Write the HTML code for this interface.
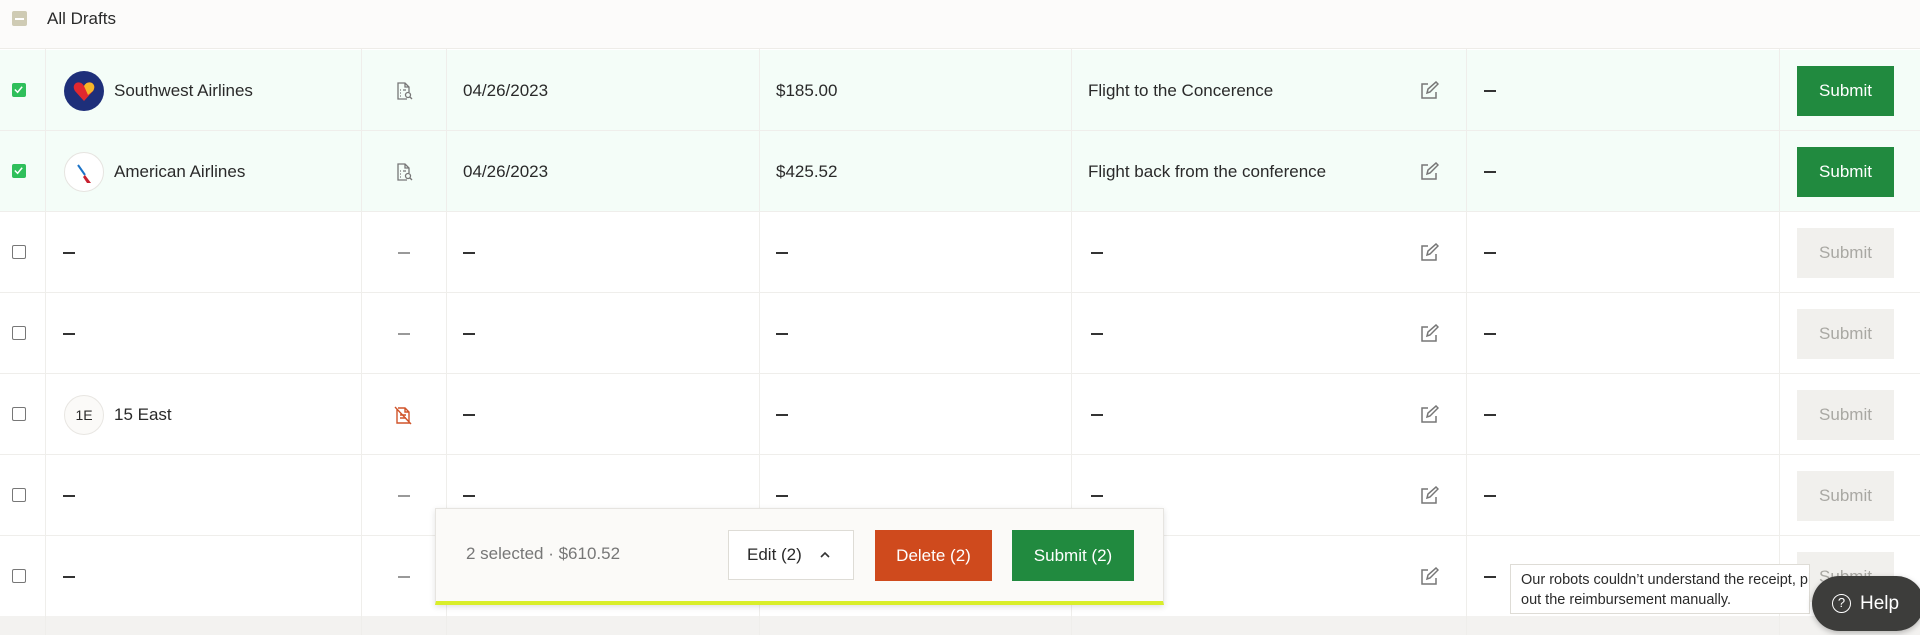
<!DOCTYPE html>
<html><head><meta charset="utf-8"><style>
*{box-sizing:border-box;margin:0;padding:0}
body{width:1920px;height:635px;overflow:hidden;background:#fff;font-family:"Liberation Sans",sans-serif;color:#2a2a2a;position:relative}
.hdr{position:absolute;left:0;top:0;width:1920px;height:49px;background:#fcfbfa;border-bottom:1px solid #eeece8}
.row{position:absolute;left:0;width:1920px;height:81px;border-bottom:1px solid #efeeeb;font-size:17px}
.row.sel{background:#f4fdf8}
.vl{position:absolute;top:49px;height:586px;width:1px;background:#efeeeb}
.cb{position:absolute;left:12px;width:14px;height:14px;border:1.5px solid #777;border-radius:2px;top:33px;background:#fff}
.cb.on{background:#2fbf5b;border-color:#2fbf5b}
.t{position:absolute;top:31px;white-space:nowrap}
.dash{position:absolute;top:40px;width:12px;height:1.6px;background:#333}
.btn{position:absolute;left:1797px;top:16px;width:97px;height:50px;color:#fff;font-size:17px;text-align:center;line-height:50px}
.g{background:#218a3f}.d{background:#f1f0ed;color:#a9a8a3}
.logo{position:absolute;left:64px;top:21px;width:40px;height:40px;border-radius:50%}
</style></head><body>
<div class="hdr"><div style="position:absolute;left:12px;top:11px;width:15px;height:15px;background:#cfcbb4;border-radius:2px"><div style="position:absolute;left:3px;top:7px;width:9px;height:1.5px;background:#fff"></div></div><div style="position:absolute;left:47px;top:9px;font-size:17px">All Drafts</div></div>

<div class="row sel" style="top:50px">
<div class="cb on"><svg width="11" height="11" viewBox="0 0 12 12" style="position:absolute;left:0;top:0"><path d="M2 6l3 3 5-6" stroke="#fff" stroke-width="1.6" fill="none"/></svg></div>
<div class="logo" style="background:#1e2f7a"><svg width="40" height="40" viewBox="0 0 40 40"><path d="M20 30 L11 20 Q8 15 12 12 Q17 10 20 15 Q23 10 28 12 Q32 15 29 20Z" fill="#e1282f"/><path d="M20 15 Q23 10 28 12 Q32 15 29 20 L24 24Z" fill="#f6b629"/></svg></div>
<div class="t" style="left:114px">Southwest Airlines</div>
<svg style="position:absolute;left:396px;top:32px" width="18" height="19" viewBox="0 0 18 19" fill="none" stroke="#777" stroke-width="1.3"><path d="M11 17H2V1h7l4 4v5M9 1v4h4M4 8h1M4 11h1M4 14h1M7 8h3"/><circle cx="12" cy="13" r="2.5"/><path d="M14 15l2 2"/></svg>
<div class="t" style="left:463px">04/26/2023</div><div class="t" style="left:776px">$185.00</div><div class="t" style="left:1088px">Flight to the Concerence</div>
<div class="dash" style="left:1484px"></div><div class="btn g">Submit</div></div>

<div class="row sel" style="top:131px">
<div class="cb on"><svg width="11" height="11" viewBox="0 0 12 12" style="position:absolute;left:0;top:0"><path d="M2 6l3 3 5-6" stroke="#fff" stroke-width="1.6" fill="none"/></svg></div>
<div class="logo" style="background:#fff;border:1px solid #e6e4e0"><svg width="40" height="40" viewBox="0 0 40 40"><path d="M13 12l7 10" stroke="#1b73c7" stroke-width="2"/><path d="M20 22 L26 30 L22 30 L18 24Z" fill="#c8202f"/></svg></div>
<div class="t" style="left:114px">American Airlines</div>
<svg style="position:absolute;left:396px;top:32px" width="18" height="19" viewBox="0 0 18 19" fill="none" stroke="#777" stroke-width="1.3"><path d="M11 17H2V1h7l4 4v5M9 1v4h4M4 8h1M4 11h1M4 14h1M7 8h3"/><circle cx="12" cy="13" r="2.5"/><path d="M14 15l2 2"/></svg>
<div class="t" style="left:463px">04/26/2023</div><div class="t" style="left:776px">$425.52</div><div class="t" style="left:1088px">Flight back from the conference</div>
<div class="dash" style="left:1484px"></div><div class="btn g">Submit</div></div>

<div class="row" style="top:212px"><div class="cb"></div><div class="dash" style="left:63px"></div><div class="dash" style="left:398px;background:#999"></div><div class="dash" style="left:463px"></div><div class="dash" style="left:776px"></div><div class="dash" style="left:1091px"></div><div class="dash" style="left:1484px"></div><div class="btn d">Submit</div></div>
<div class="row" style="top:293px"><div class="cb"></div><div class="dash" style="left:63px"></div><div class="dash" style="left:398px;background:#999"></div><div class="dash" style="left:463px"></div><div class="dash" style="left:776px"></div><div class="dash" style="left:1091px"></div><div class="dash" style="left:1484px"></div><div class="btn d">Submit</div></div>
<div class="row" style="top:374px"><div class="cb"></div>
<div class="logo" style="background:#fbfaf8;border:1px solid #e8e6e2;font-size:14px;text-align:center;line-height:38px">1E</div>
<div class="t" style="left:114px">15 East</div>
<svg style="position:absolute;left:394px;top:32px" width="18" height="19" viewBox="0 0 18 19" fill="none" stroke="#d0542a" stroke-width="1.4"><path d="M3 3v14h12V6l-4-4H4M11 2v4h4M6 9h6M6 12h6M1 1l16 17"/></svg>
<div class="dash" style="left:463px"></div><div class="dash" style="left:776px"></div><div class="dash" style="left:1091px"></div><div class="dash" style="left:1484px"></div><div class="btn d">Submit</div></div>
<div class="row" style="top:455px"><div class="cb"></div><div class="dash" style="left:63px"></div><div class="dash" style="left:398px;background:#999"></div><div class="dash" style="left:463px"></div><div class="dash" style="left:776px"></div><div class="dash" style="left:1091px"></div><div class="dash" style="left:1484px"></div><div class="btn d">Submit</div></div>
<div class="row" style="top:536px"><div class="cb"></div><div class="dash" style="left:63px"></div><div class="dash" style="left:398px;background:#999"></div><div class="dash" style="left:1484px"></div><div class="btn d">Submit</div></div>
<div style="position:absolute;left:0;top:616px;width:1920px;height:19px;background:#f3f2f0"></div>

<div class="vl" style="left:45px"></div><div class="vl" style="left:361px"></div><div class="vl" style="left:446px"></div><div class="vl" style="left:759px"></div><div class="vl" style="left:1071px"></div><div class="vl" style="left:1466px"></div><div class="vl" style="left:1779px"></div>

<svg style="position:absolute;left:1419px;top:81px" width="20" height="20" viewBox="0 0 20 20" fill="none" stroke="#777" stroke-width="1.5"><path d="M9 3H3v14h14v-6M8 12l1-4 8-7 2 2-8 8z"/></svg>
<svg style="position:absolute;left:1419px;top:162px" width="20" height="20" viewBox="0 0 20 20" fill="none" stroke="#777" stroke-width="1.5"><path d="M9 3H3v14h14v-6M8 12l1-4 8-7 2 2-8 8z"/></svg>
<svg style="position:absolute;left:1419px;top:243px" width="20" height="20" viewBox="0 0 20 20" fill="none" stroke="#777" stroke-width="1.5"><path d="M9 3H3v14h14v-6M8 12l1-4 8-7 2 2-8 8z"/></svg>
<svg style="position:absolute;left:1419px;top:324px" width="20" height="20" viewBox="0 0 20 20" fill="none" stroke="#777" stroke-width="1.5"><path d="M9 3H3v14h14v-6M8 12l1-4 8-7 2 2-8 8z"/></svg>
<svg style="position:absolute;left:1419px;top:405px" width="20" height="20" viewBox="0 0 20 20" fill="none" stroke="#777" stroke-width="1.5"><path d="M9 3H3v14h14v-6M8 12l1-4 8-7 2 2-8 8z"/></svg>
<svg style="position:absolute;left:1419px;top:486px" width="20" height="20" viewBox="0 0 20 20" fill="none" stroke="#777" stroke-width="1.5"><path d="M9 3H3v14h14v-6M8 12l1-4 8-7 2 2-8 8z"/></svg>
<svg style="position:absolute;left:1419px;top:567px" width="20" height="20" viewBox="0 0 20 20" fill="none" stroke="#777" stroke-width="1.5"><path d="M9 3H3v14h14v-6M8 12l1-4 8-7 2 2-8 8z"/></svg>

<div style="position:absolute;left:435px;top:508px;width:729px;height:97px;background:#fbfaf8;border:1px solid #e6e4e0;border-bottom:4px solid #d9ee2a;box-shadow:0 2px 6px rgba(0,0,0,.12)">
<div style="position:absolute;left:30px;top:35px;font-size:17px;color:#777">2 selected · $610.52</div>
<div style="position:absolute;left:292px;top:21px;width:126px;height:50px;background:#fff;border:1px solid #dedcd6;font-size:17px;line-height:48px;padding-left:18px">Edit (2)<svg style="position:absolute;left:90px;top:19px" width="12" height="10" viewBox="0 0 12 10"><path d="M2 7l4-4 4 4" stroke="#333" stroke-width="1.6" fill="none"/></svg></div>
<div style="position:absolute;left:439px;top:21px;width:117px;height:51px;background:#cf4a1d;color:#fff;font-size:17px;line-height:51px;text-align:center">Delete (2)</div>
<div style="position:absolute;left:576px;top:21px;width:122px;height:51px;background:#218a3f;color:#fff;font-size:17px;line-height:51px;text-align:center">Submit (2)</div>
</div>

<div style="position:absolute;left:1510px;top:564px;width:300px;height:50px;background:#fff;border:1px solid #dedcd6;font-size:14.5px;line-height:20px;padding:5px 10px;white-space:nowrap;overflow:hidden">Our robots couldn’t understand the receipt, please fill<br>out the reimbursement manually.</div>
<div style="position:absolute;left:1812px;top:576px;width:112px;height:55px;border-radius:28px;background:#3d3d3b;color:#fff;font-size:19px;line-height:55px;padding-left:48px;box-shadow:0 2px 6px rgba(0,0,0,.25)">Help<div style="position:absolute;left:20px;top:18px;width:19px;height:19px;border:1.5px solid #fff;border-radius:50%;font-size:13px;line-height:16px;text-align:center">?</div></div>
</body></html>
